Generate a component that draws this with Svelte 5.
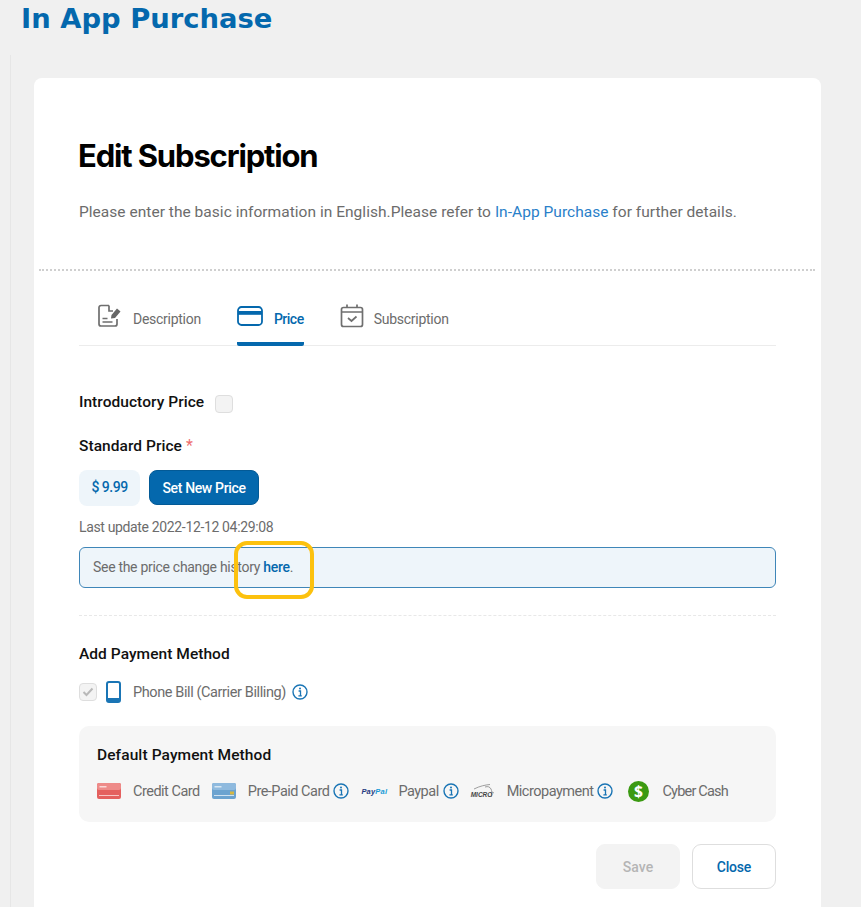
<script>
  const tabs = [
    { id: 'desc', label: 'Description' },
    { id: 'price', label: 'Price', active: true },
    { id: 'sub', label: 'Subscription' }
  ];
</script>

{#snippet info()}
  <svg class="info" viewBox="0 0 16 16" width="16" height="16" aria-hidden="true">
    <circle cx="8" cy="8" r="7" fill="none" stroke="#1a75b5" stroke-width="1.4" />
    <circle cx="8" cy="4.6" r="1" fill="#1a75b5" />
    <path d="M6.6 7h1.9v4.6M6.4 11.8h3.4" fill="none" stroke="#1a75b5" stroke-width="1.3" />
  </svg>
{/snippet}

<div class="page">
  <h1 class="title">In App Purchase</h1>
  <div class="rail">
    <main class="card">
      <header class="head">
        <h2>Edit Subscription</h2>
        <p class="intro">Please enter the basic information in English.Please refer to <a href="#x">In-App Purchase</a> for further details.</p>
      </header>
      <div class="dots"></div>
      <div class="body">
        <nav class="tabs">
          {#each tabs as t}
            <div class="tab" class:active={t.active}>
              {#if t.id === 'desc'}
                <svg viewBox="0 0 24 24" width="24" height="24" fill="none" stroke="#6f6f6f" stroke-width="1.7">
                  <path d="M12 1.500H4a2 2 0 0 0-2 2V20a2 2 0 0 0 2 2h14a2 2 0 0 0 2-2v-5" />
                  <path d="M12 1.500v5.500h4" />
                  <path d="M5.500 14.500h5M5.500 18h10" />
                  <path d="M14 14.500l.5-3.500 5.500-6.500 3.500 3-5.500 6.500z" fill="#666" stroke="none" />
                </svg>
              {:else if t.id === 'price'}
                <svg viewBox="0 0 26 20" width="26" height="20" fill="none">
                  <rect x="1" y="1" width="24" height="18" rx="3.500" stroke="#0468ad" stroke-width="1.800" />
                  <rect x="1" y="5" width="24" height="3.800" fill="#0468ad" />
                </svg>
              {:else}
                <svg viewBox="0 0 24 24" width="24" height="24" fill="none" stroke="#6f6f6f" stroke-width="1.700">
                  <rect x="1.500" y="3.500" width="21" height="19" rx="2" />
                  <path d="M1.500 8h21M7 .5v3M17 .5v3" />
                  <path d="M8 14l3.500 3 5-4.500" />
                </svg>
              {/if}
              <span>{t.label}</span>
            </div>
          {/each}
        </nav>

        <div class="intro-price">
          <strong>Introductory Price</strong>
          <span class="box"></span>
        </div>

        <div class="std"><strong>Standard Price</strong> <span class="req">*</span></div>
        <div class="price-row">
          <span class="amount">$ 9.99</span>
          <button class="primary">Set New Price</button>
        </div>
        <div class="updated">Last update 2022-12-12 04:29:08</div>
        <div class="notice">
          <span class="notice-text">See the price change history <a href="#h">here</a>.
            <span class="mark"></span>
          </span>
        </div>

        <div class="sep"></div>

        <div class="add"><strong>Add Payment Method</strong></div>
        <div class="phone">
          <span class="box checked">
            <svg viewBox="0 0 12 10" width="12" height="10"><path d="M1.500 5l3 3 6-6.500" fill="none" stroke="#b8b8b8" stroke-width="2" /></svg>
          </span>
          <svg class="ph" viewBox="0 0 15 22" width="15" height="22">
            <rect x="1" y="1" width="13" height="20" rx="2" fill="none" stroke="#1a75b5" stroke-width="2" />
            <rect x="1" y="17" width="13" height="4" fill="#1a75b5" />
          </svg>
          <span class="lbl">Phone Bill (Carrier Billing)</span>
          {@render info()}
        </div>

        <section class="default">
          <strong>Default Payment Method</strong>
          <div class="methods">
            <svg class="pm" viewBox="0 0 24 16" width="24" height="16">
              <rect width="24" height="16" rx="2" fill="#e4605e" />
              <rect x="0" y="0" width="24" height="7" rx="2" fill="#ee8b89" />
              <rect x="2" y="12" width="20" height="1" fill="#f7c5c4" />
              <rect x="2.500" y="3" width="7" height="1.500" fill="#fbd8d7" />
            </svg>
            <span class="lbl cc">Credit Card</span>
            <svg class="pm" viewBox="0 0 24 16" width="24" height="16">
              <rect width="24" height="16" rx="2" fill="#6ba3d0" />
              <rect x="0" y="0" width="24" height="7" rx="2" fill="#8fbade" />
              <rect x="2" y="12" width="20" height="1" fill="#cfe2f1" />
              <rect x="18" y="8.500" width="4" height="3" fill="#d6b843" />
              <rect x="2.500" y="3" width="7" height="1.500" fill="#d7e7f4" />
            </svg>
            <span class="lbl pp">Pre-Paid Card</span>
            {@render info()}
            <span class="paypal"><i>Pay</i><i>Pal</i></span>
            <span class="lbl pal">Paypal</span>
            {@render info()}
            <span class="micro">
              <svg viewBox="0 0 24 16" width="24" height="16" fill="none" stroke="#777" stroke-width=".7">
                <path d="M3 6C9 3 14 2 19 1.500M14 4c3-1 5 0 6 2s1 4 .5 8M21 9l2 1" />
              </svg>
              <b>MICRO</b>
            </span>
            <span class="lbl mp">Micropayment</span>
            {@render info()}
            <svg class="cash" viewBox="0 0 20 20" width="21" height="21">
              <circle cx="10" cy="10" r="10" fill="#3b9a12" />
              <text x="10" y="15.500" text-anchor="middle" font-family="'Noto Sans', sans-serif" font-weight="700" font-size="15" fill="#fff">$</text>
            </svg>
            <span class="lbl cy">Cyber Cash</span>
          </div>
        </section>

        <div class="actions">
          <button class="save" disabled>Save</button>
          <button class="close">Close</button>
        </div>
      </div>
    </main>
  </div>
</div>

<style>
  :global(body) {
    margin: 0;
    background: #f0f0f0;
    overflow: hidden;
  }
  .page {
    height: 907px;
    overflow: hidden;
    font-family: "Roboto", "Liberation Sans", sans-serif;
    color: #6c6c6c;
  }
  .title {
    margin: 0;
    padding: 0 0 0 21px;
    height: 55px;
    font: 700 27.400px/37px "DejaVu Sans", sans-serif;
    color: #0468ad;
  }
  .rail {
    margin-left: 10px;
    border-left: 1px solid #e6e6e6;
    padding: 23px 40px 0 23px;
  }
  .card {
    background: #fff;
    border-radius: 8px;
    height: 900px;
    padding-top: 1px;
  }
  .head {
    padding: 0 45px;
  }
  h2 {
    margin: 0 0 0 -1px;
    padding-top: 55px;
    font: 700 31px/44px "Inter", sans-serif;
    letter-spacing: -1.150px;
    color: #000;
  }
  .intro {
    margin: 23px 0 0;
    font-size: 15.500px;
    line-height: 22px;
    letter-spacing: 0.03px;
    white-space: nowrap;
  }
  .intro a {
    color: #2a7fc9;
    text-decoration: none;
  }
  .dots {
    margin: 46px 6px 0 5px;
    border-top: 2px dotted #cfcfcf;
  }
  .body {
    padding: 0 45px;
  }
  .tabs {
    display: flex;
    height: 74px;
    border-bottom: 1px solid #ececec;
    padding-left: 18px;
    gap: 36px;
  }
  .tab {
    display: flex;
    align-items: center;
    gap: 12px;
    height: 75px;
    font-size: 14px;
    letter-spacing: -0.27px;
    box-sizing: border-box;
    padding-top: 20px;
  }
  .tab:last-child {
    gap: 10px;
  }
  .tab svg {
    margin-top: -6px;
  }
  .tab.active {
    color: #0468ad;
    font-weight: 500;
    letter-spacing: -0.5px;
    border-bottom: 4px solid #0468ad;
    border-radius: 2px;
    gap: 11px;
    padding-top: 24px;
  }
  strong {
    font-weight: 500;
    color: #111;
    font-size: 15.500px;
    letter-spacing: 0.05px;
  }
  .intro-price {
    display: flex;
    align-items: center;
    gap: 11px;
    margin-top: 45px;
    height: 22px;
  }
  .intro-price .box {
    margin-top: 3px;
  }
  .box {
    display: inline-flex;
    align-items: center;
    justify-content: center;
    width: 16px;
    height: 16px;
    background: #f3f3f3;
    border: 1px solid #dedede;
    border-radius: 4px;
  }
  .std {
    margin-top: 22px;
    height: 22px;
    line-height: 22px;
  }
  .req {
    color: #ee6f6f;
  }
  .price-row {
    display: flex;
    gap: 9px;
    margin-top: 13px;
  }
  .amount {
    width: 61px;
    height: 36px;
    line-height: 35px;
    text-align: center;
    background: #eef5fa;
    border-radius: 8px;
    color: #0468ad;
    font-weight: 500;
    font-size: 14px;
    letter-spacing: -0.5px;
  }
  button {
    font-family: inherit;
    font-weight: 500;
    font-size: 14px;
    padding: 0;
  }
  .primary {
    width: 110px;
    height: 35px;
    background: #0468ad;
    color: #fff;
    border: 1px solid #035a96;
    border-radius: 8px;
    letter-spacing: -0.35px;
  }
  .updated {
    margin-top: 11px;
    font-size: 14px;
    line-height: 20px;
    letter-spacing: -0.35px;
  }
  .notice {
    margin-top: 10px;
    height: 39px;
    line-height: 39px;
    padding-left: 13px;
    background: #eef5fa;
    border: 1px solid #3f86b8;
    border-radius: 6px;
    font-size: 14px;
    letter-spacing: -0.3px;
  }
  .notice-text {
    position: relative;
    display: inline-block;
  }
  .notice a {
    color: #0468ad;
    font-weight: 500;
    text-decoration: none;
  }
  .mark {
    position: absolute;
    left: 141px;
    top: -7px;
    width: 80px;
    height: 58px;
    border: 4px solid #fcc10e;
    border-radius: 13px;
    box-sizing: border-box;
  }
  .sep {
    margin-top: 27px;
    border-top: 1px dashed #e8e8e8;
  }
  .add {
    margin-top: 27px;
    line-height: 22px;
  }
  .phone {
    display: flex;
    align-items: center;
    margin-top: 15px;
    height: 24px;
  }
  .checked {
    margin-right: 9px;
  }
  .ph {
    margin-right: 12px;
  }
  .lbl {
    font-size: 14.500px;
    letter-spacing: -0.4px;
    white-space: nowrap;
  }
  .methods .lbl {
    letter-spacing: -0.5px;
  }
  .methods .cy {
    letter-spacing: -0.8px;
  }
  .phone .info {
    margin-left: 6px;
  }
  .default {
    margin-top: 22px;
    background: #f6f6f6;
    border-radius: 10px;
    height: 96px;
    padding: 18px 18px 0;
    box-sizing: border-box;
  }
  .default strong {
    display: block;
    line-height: 22px;
    letter-spacing: 0.1px;
  }
  .methods {
    display: flex;
    align-items: center;
    margin-top: 13px;
    height: 24px;
  }
  .pm {
    margin-right: 12px;
    filter: blur(0.4px);
  }
  .cc { margin-right: 12px; }
  .methods .info { margin-left: 4px; margin-right: 12px; }
  .paypal {
    font: italic 700 7.500px "Liberation Sans", sans-serif;
    letter-spacing: 0.2px;
    width: 26px;
    margin-right: 11px;
    white-space: nowrap;
  }
  .paypal i:first-child { color: #253b80; }
  .paypal i:last-child { color: #179bd7; }
  .micro {
    position: relative;
    width: 24px;
    height: 16px;
    margin-right: 12px;
  }
  .micro svg { display: block; }
  .micro b {
    position: absolute;
    left: 0;
    top: 8px;
    font: italic 700 6.500px "Liberation Sans", sans-serif;
    color: #444;
  }
  .cash {
    margin-left: 3px;
    margin-right: 13px;
  }
  .actions {
    display: flex;
    justify-content: flex-end;
    gap: 12px;
    margin-top: 22px;
  }
  .save, .close {
    width: 84px;
    height: 45px;
    border-radius: 9px;
    font-size: 14px;
  }
  .save {
    background: #f3f3f3;
    border: 1px solid #f3f3f3;
    color: #b5b5b5;
  }
  .close {
    background: #fff;
    border: 1px solid #dedede;
    color: #0468ad;
    letter-spacing: -0.2px;
  }
</style>
